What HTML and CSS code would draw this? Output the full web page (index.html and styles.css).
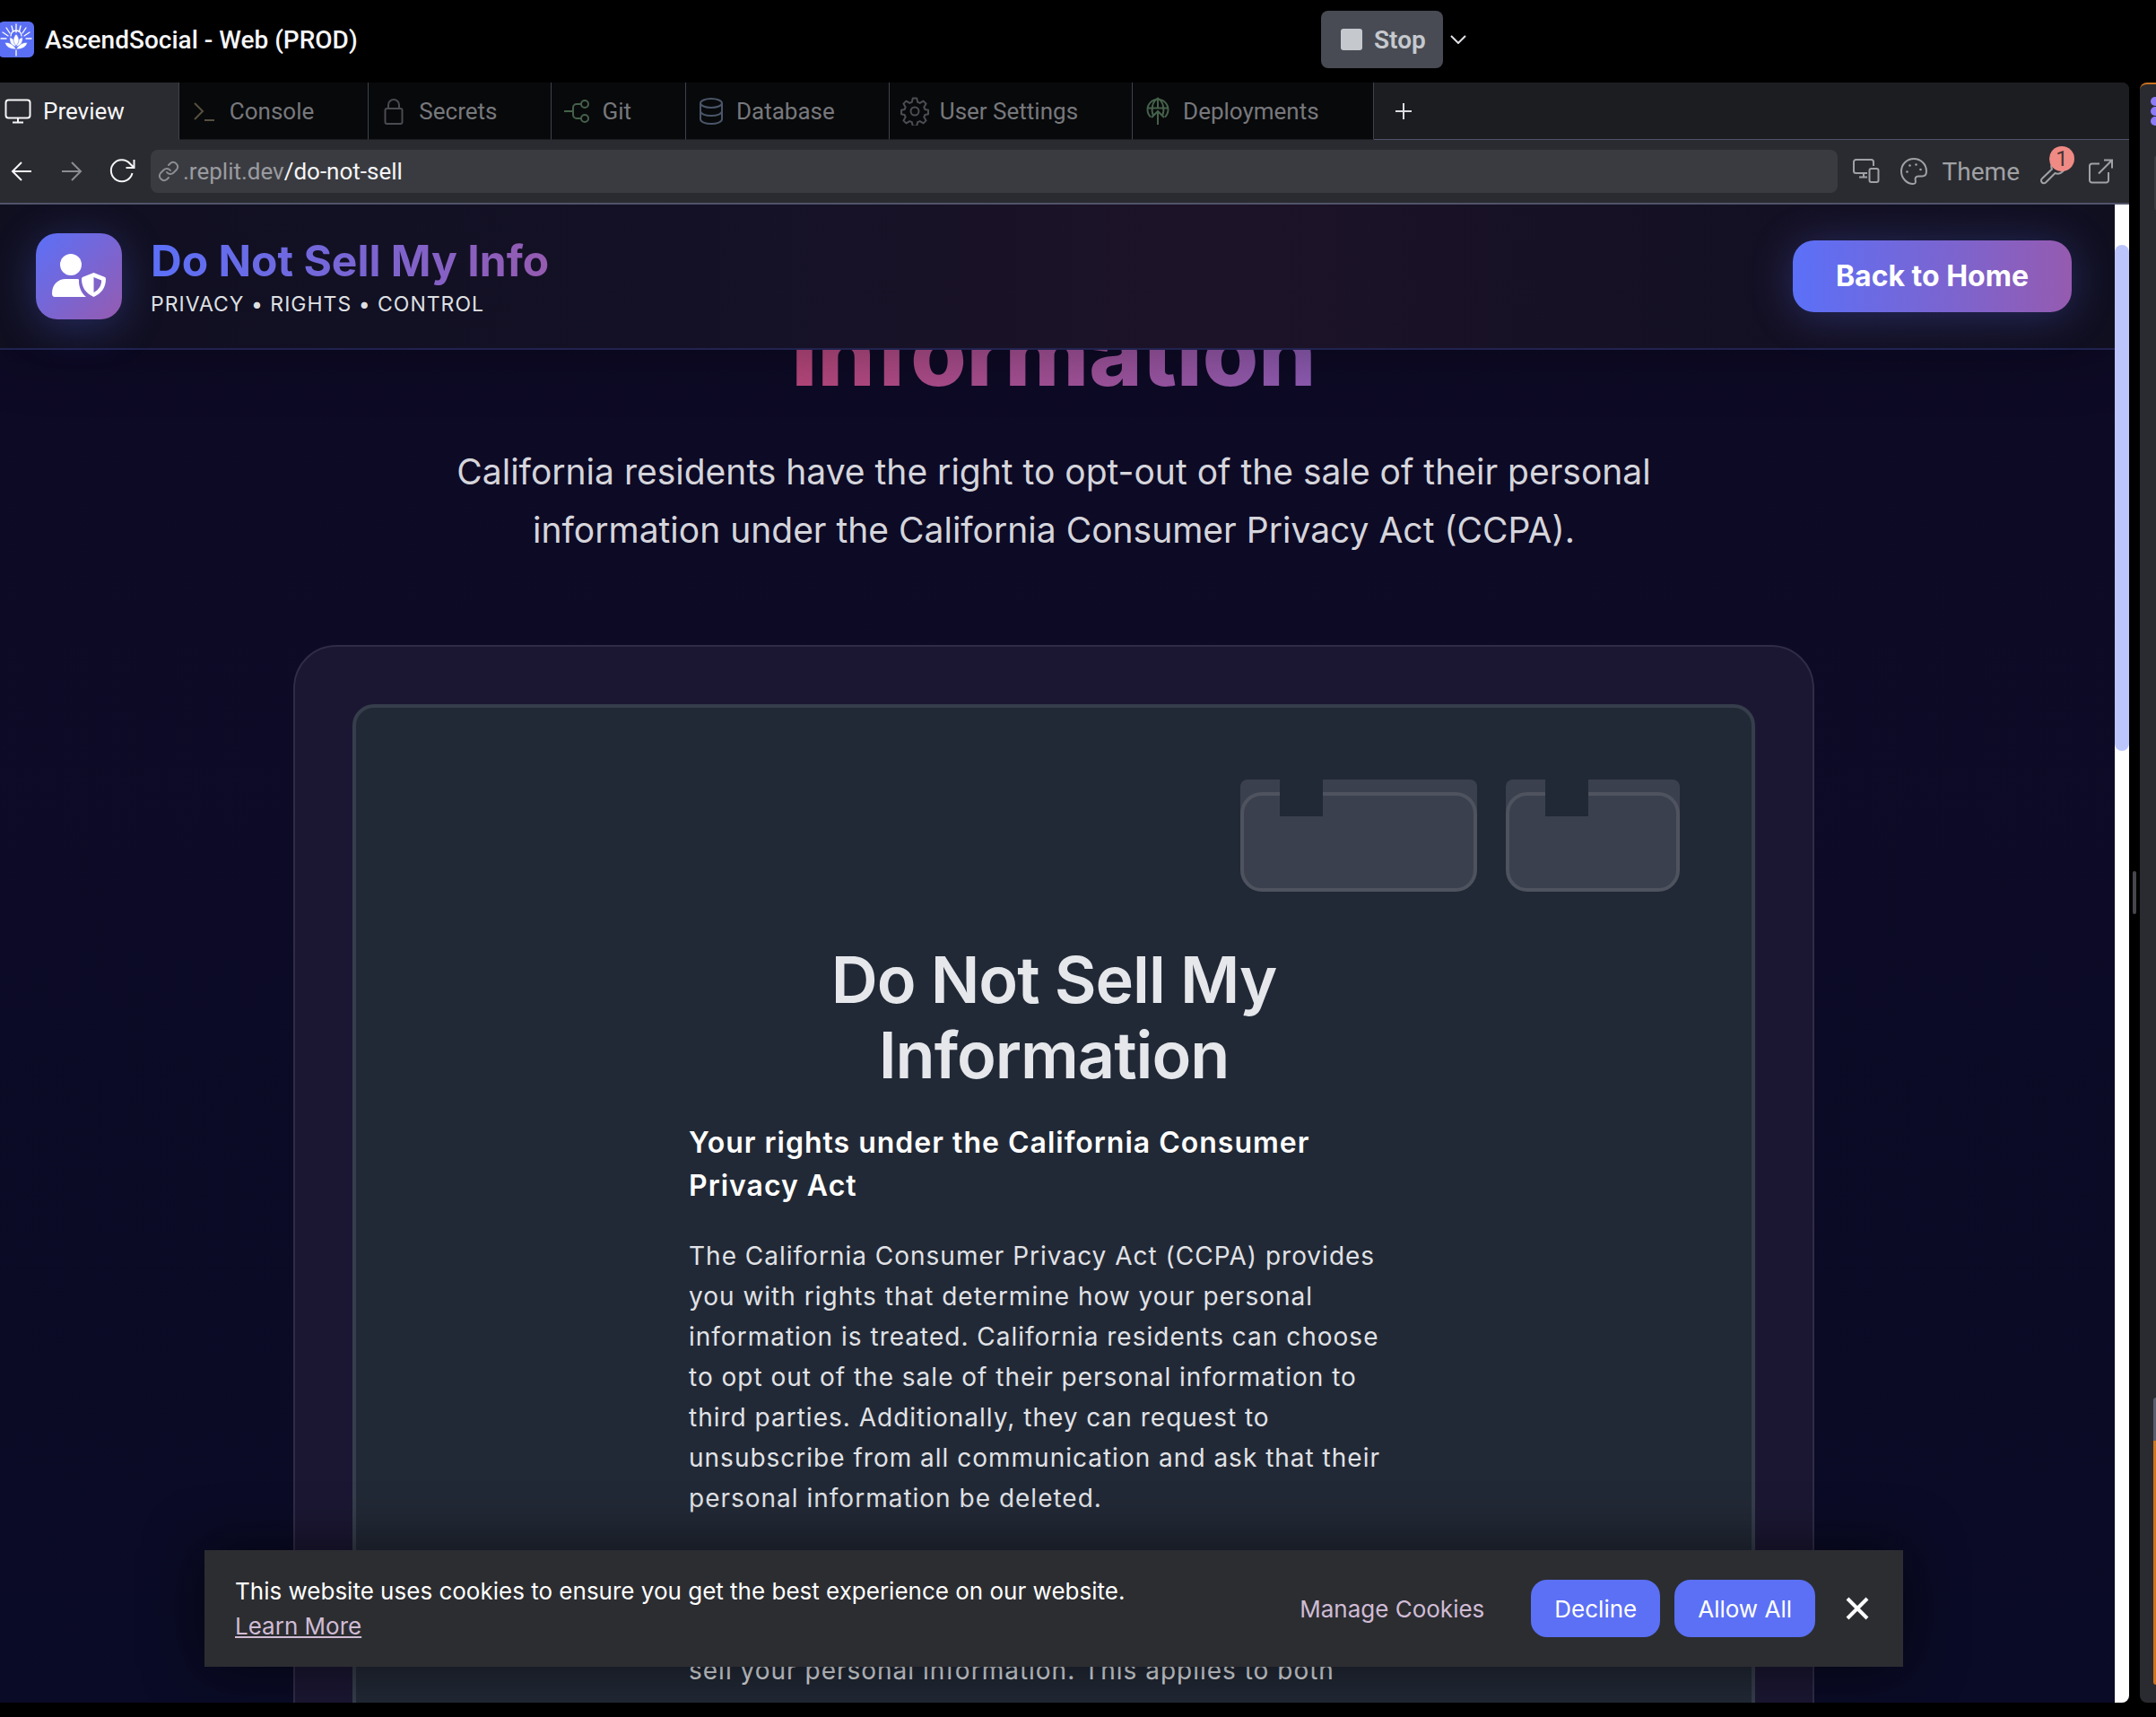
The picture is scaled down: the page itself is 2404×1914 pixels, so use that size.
FILE: index.html
```html
<!DOCTYPE html>
<html lang="en">
<head>
<meta charset="utf-8">
<meta name="viewport" content="width=device-width, initial-scale=1">
<title>AscendSocial - Web (PROD)</title>
<link rel="stylesheet" href="styles.css">
</head>
<body>
<div class="app">
  <header class="topbar">
    <div class="project">
      <svg class="project-logo" viewBox="0 0 40 40" aria-hidden="true">
        <rect width="40" height="40" rx="6" fill="#5b6ff5"/>
        <g stroke="#fff" stroke-width="1.3" stroke-linecap="round" fill="none">
          <path d="M20 3v9M20 32v6M15 5l1.500 6M25 5l-1.500 6M9 7l4 6M31 7l-4 6M5 12l6 4M35 12l-6 4M3 19h6M37 19h-6M14 16a6 6 0 0 1 12 0"/>
        </g>
        <g fill="#fff" stroke="#5b6ff5" stroke-width=".6">
          <path d="M20 31C13 31 8.500 28 7.500 23.500c5-.5 10 2 12.500 7.500z"/>
          <path d="M20 31c7 0 11.500-3 12.500-7.500-5-.5-10 2-12.500 7.500z"/>
          <path d="M20 28c-5-1-8-5-7-10.500 4 1.500 7 5 7 10.500z"/>
          <path d="M20 28c5-1 8-5 7-10.500-4 1.500-7 5-7 10.500z"/>
          <path d="M20 27c-4-4-4-9 0-13 4 4 4 9 0 13z"/>
        </g>
      </svg>
      <span class="project-name">AscendSocial - Web (PROD)</span>
    </div>
    <div class="run">
      <button class="stop" type="button"><span class="stop-mark"></span>Stop</button>
      <button class="icon-button run-menu" type="button" aria-label="Run options">
        <svg width="18" height="10" viewBox="0 0 18 10" fill="none" stroke="#dfe1e5" stroke-width="2"><path d="M1 1l8 8 8-8"/></svg>
      </button>
    </div>
  </header>

  <div class="workspace">
    <section class="pane">
      <div class="tabs" role="tablist">
        <button class="tab tab-active" role="tab" aria-selected="true" type="button">
          <svg class="tab-icon" viewBox="0 0 32 32" stroke="#f5f5f7"><rect x="2.500" y="3.500" width="27" height="20" rx="3"/><path d="M16 23.500v5M10 28.500h12"/></svg>Preview</button>
        <button class="tab" role="tab" type="button">
          <svg class="tab-icon" viewBox="0 0 32 32" stroke="#57503f"><path d="M5 7l9 9-9 9M16 26h11"/></svg>Console</button>
        <button class="tab" role="tab" type="button">
          <svg class="tab-icon" viewBox="0 0 32 32" stroke="#4a4b50"><rect x="6.500" y="13" width="19" height="17" rx="2"/><path d="M10 13V9a6 6 0 0 1 12 0v4"/></svg>Secrets</button>
        <button class="tab" role="tab" type="button">
          <svg class="tab-icon" viewBox="0 0 32 32" stroke="#45604a"><path d="M2 16h10M21 8h-5a4 4 0 0 0-4 4v8a4 4 0 0 0 4 4h5"/><circle cx="25" cy="8" r="4"/><circle cx="25" cy="24" r="4"/></svg>Git</button>
        <button class="tab" role="tab" type="button">
          <svg class="tab-icon" viewBox="0 0 32 32" stroke="#4a5668"><ellipse cx="16" cy="7" rx="12" ry="5"/><path d="M4 7v18c0 2.800 5.400 5 12 5s12-2.200 12-5V7M4 16c0 2.800 5.400 5 12 5s12-2.200 12-5"/></svg>Database</button>
        <button class="tab" role="tab" type="button">
          <svg class="tab-icon" viewBox="0 0 32 32" stroke="#4c4d52"><circle cx="16" cy="16" r="4.500"/><path d="M13.800 1.500h4.400l1 4.300 2.500 1.100 3.900-2.300 3 3-2.300 3.900 1.100 2.500 3.600.8v4.400l-3.600.8-1.100 2.500 2.300 3.900-3 3-3.900-2.300-2.500 1.100-1 4.300h-4.400l-1-4.300-2.500-1.100-3.900 2.300-3-3 2.300-3.900-1.100-2.500-3.600-.8v-4.400l3.600-.8 1.100-2.500-2.300-3.900 3-3 3.900 2.300 2.500-1.100z" stroke-linejoin="round"/></svg>User Settings</button>
        <button class="tab" role="tab" type="button">
          <svg class="tab-icon" viewBox="0 0 32 32" stroke="#45604a"><path d="M8 22.500a11.500 11.500 0 1 1 16 0M4.500 12.500h23M11 21c-3-7-1-16 5-19.500 6 3.500 8 12.500 5 19.500M16 2v11M16 31V17M9 23l7-7 7 7"/></svg>Deployments</button>
        <div class="tabs-rest">
          <button class="icon-button" type="button" aria-label="New tab">
            <svg width="20" height="20" viewBox="0 0 20 20" stroke="#dcdde0" stroke-width="2"><path d="M10 1v18M1 10h18"/></svg>
          </button>
        </div>
      </div>

      <div class="toolbar">
        <div class="nav">
          <button class="icon-button" type="button" aria-label="Back"><svg width="32" height="32" viewBox="0 0 32 32" stroke="#f5f5f7"><path d="M27 16H6M16 6L6 16l10 10"/></svg></button>
          <button class="icon-button" type="button" aria-label="Forward"><svg width="32" height="32" viewBox="0 0 32 32" stroke="#8c8d92"><path d="M5 16h21M16 6l10 10-10 10"/></svg></button>
          <button class="icon-button" type="button" aria-label="Reload"><svg width="32" height="32" viewBox="0 0 32 32" stroke="#f5f5f7"><path d="M27.500 18A12 12 0 1 1 25 7.500l4 4M29.500 3v9h-9"/></svg></button>
        </div>
        <label class="address">
          <svg width="24" height="24" viewBox="0 0 24 24" stroke="#8c8d92" stroke-linecap="round"><path d="M10 13a5 5 0 0 0 7.500.5l3.500-3.500a5 5 0 0 0-7-7l-2 2M14 11a5 5 0 0 0-7.500-.5L3 14a5 5 0 0 0 7 7l2-2"/></svg>
          <span class="address-host">.replit.dev</span>
          <input class="address-path" type="text" value="/do-not-sell" aria-label="Path">
        </label>
        <div class="tools">
          <button class="icon-button" type="button" aria-label="Device size"><svg width="32" height="32" viewBox="0 0 32 32" stroke="#a0a1a5"><path d="M24 10V5.500a2.500 2.500 0 0 0-2.500-2.500h-17A2.500 2.500 0 0 0 2 5.500v10A2.500 2.500 0 0 0 4.500 18H17M13 18v4M8 22.500h9"/><rect x="19.500" y="13" width="10" height="15" rx="2"/></svg></button>
          <button class="icon-button theme" type="button"><svg width="32" height="32" viewBox="0 0 32 32" stroke="#a0a1a5"><path d="M16 2C8.300 2 2 8 2 16s6.500 14 13 14c2.500 0 3.300-1.600 2.800-3.500-.8-3 .4-5 3.200-5h4c3 0 5-2 5-5.500C30 8 23.700 2 16 2z"/><g fill="#a0a1a5" stroke="none"><circle cx="11.500" cy="9.500" r="1.300"/><circle cx="18.500" cy="8.500" r="1.300"/><circle cx="23.500" cy="14" r="1.300"/><circle cx="8.500" cy="16.500" r="1.300"/></g></svg>Theme</button>
          <button class="icon-button devtools" type="button" aria-label="Developer tools"><svg width="32" height="32" viewBox="0 0 32 32" stroke="#a0a1a5" stroke-linejoin="round"><path d="M20.500 8l6-4.500A8 8 0 0 0 15 13.500L4 24a3 3 0 0 0 4 4.500L18.500 18A8 8 0 0 0 29 8l-5 4.500z"/></svg><span class="badge">1</span></button>
          <button class="icon-button" type="button" aria-label="Open in new tab"><svg width="32" height="32" viewBox="0 0 32 32" stroke="#a0a1a5"><path d="M15 7.500H6.500A2.500 2.500 0 0 0 4 10v16a2.500 2.500 0 0 0 2.500 2.500h16A2.500 2.500 0 0 0 25 26v-9M20 3.500h9v9M29 3.500L14 18.500"/></svg></button>
        </div>
      </div>

      <div class="viewport">
        <div class="page">
          <header class="site-header">
            <div class="brand">
              <span class="brand-mark">
                <svg width="60" height="50" viewBox="0 0 60 50" aria-hidden="true">
                  <circle cx="21" cy="12" r="12" fill="#fff"/>
                  <path d="M0 44c0-10 7-16 15-16h12c1 0 2 .1 3 .4C29.500 36 32.500 43.500 38 48H3c-2 0-3-1.500-3-4z" fill="#fff"/>
                  <path fill-rule="evenodd" d="M46.500 21l12 4.800c1 .4 1.500 1.200 1.500 2.200 0 9-4.500 16-13.500 20C37.500 44 33 37 33 28c0-1 .6-1.800 1.500-2.200zM46.500 26v17c6-3 8.500-8 8.700-13.500z" fill="#fff"/>
                </svg>
              </span>
              <div class="brand-text">
                <p class="brand-title">Do Not Sell My Info</p>
                <p class="brand-tag">PRIVACY • RIGHTS • CONTROL</p>
              </div>
            </div>
            <a class="home-link" href="#home">Back to Home</a>
          </header>

          <main class="content">
            <h1 class="hero-title">Information</h1>
            <p class="hero-text">California residents have the right to opt-out of the sale of their personal information under the California Consumer Privacy Act (CCPA).</p>

            <div class="card">
              <section class="request">
                <div class="folders" aria-hidden="true">
                  <span class="folder folder-wide"></span>
                  <span class="folder"></span>
                </div>
                <div class="request-body">
                  <h2 class="request-title">Do Not Sell My Information</h2>
                  <h3 class="request-subtitle">Your rights under the California Consumer Privacy Act</h3>
                  <p class="request-text">The California Consumer Privacy Act (CCPA) provides you with rights that determine how your personal information is treated. California residents can choose to opt out of the sale of their personal information to third parties. Additionally, they can request to unsubscribe from all communication and ask that their personal information be deleted.</p>
                  <p class="request-text request-scope">sell your personal information. This applies to both</p>
                </div>
              </section>
            </div>
          </main>
        </div>
        <div class="scrollbar" aria-hidden="true"><div class="scrollbar-thumb"></div></div>

        <aside class="cookies" aria-label="Cookie notice">
          <p class="cookies-text">This website uses cookies to ensure you get the best experience on our website. <a class="cookies-more" href="#learn">Learn More</a></p>
          <div class="cookies-actions">
            <button class="cookies-manage" type="button">Manage Cookies</button>
            <button class="cookies-button" type="button">Decline</button>
            <button class="cookies-button" type="button">Allow All</button>
            <button class="icon-button cookies-close" type="button" aria-label="Close">
              <svg width="26" height="26" viewBox="0 0 26 26" stroke="#fff" stroke-width="4"><path d="M2 2l22 22M24 2L2 24"/></svg>
            </button>
          </div>
        </aside>
      </div>
    </section>

    <div class="resizer"><span class="resizer-grip"></span></div>

    <section class="side">
      <svg class="side-logo" viewBox="0 0 6 32" aria-hidden="true"><g fill="#8d7bf8"><circle cx="5" cy="5" r="5"/><circle cx="5" cy="16" r="5"/><circle cx="5" cy="27" r="5"/></g></svg>
      <div class="side-chip"></div>
      <div class="side-prompt"></div>
    </section>
  </div>
</div>
</body>
</html>
```
FILE: styles.css
```css
*, *::before, *::after { box-sizing: border-box; }

body {
  margin: 0;
  background: #000;
  color: #f5f5f7;
  font-family: "Roboto", "Noto Sans", sans-serif;
}

h1, h2, h3, p { margin: 0; }

button, input { font: inherit; color: inherit; }

button {
  border: 0;
  background: none;
  padding: 0;
  cursor: pointer;
}

svg { display: block; flex: none; }

.app {
  display: flex;
  flex-direction: column;
  height: 100vh;
  overflow: hidden;
}

/* Top bar */
.topbar {
  display: grid;
  grid-template-columns: 1473fr 931fr;
  padding: 12px 0 16px;
  font-size: 28px;
}

.project { display: flex; align-items: center; gap: 12px; }
.project-logo { width: 40px; height: 40px; margin-left: -2px; }
.project-name { font-weight: 500; }

.run { display: flex; align-items: center; gap: 8px; }

.stop {
  display: flex;
  align-items: center;
  gap: 13px;
  height: 64px;
  padding: 0 19px 0 22px;
  border-radius: 8px;
  background: #484b53;
  color: #c5c9ce;
  font-weight: 600;
}

.stop-mark { width: 24px; height: 24px; border-radius: 3px; background: #c5c9ce; }

.icon-button {
  display: flex;
  align-items: center;
  justify-content: center;
}

/* Workspace */
.workspace {
  flex: 1;
  min-height: 0;
  display: flex;
  padding-bottom: 16px;
}

.pane {
  flex: 1;
  min-width: 0;
  display: flex;
  flex-direction: column;
  overflow: hidden;
  border-radius: 0 8px 8px 0;
  background: #2a2b30;
}

.tabs { display: flex; height: 64px; font-size: 26px; }

.tab {
  display: flex;
  align-items: center;
  gap: 12px;
  padding: 0 60px 0 12px;
  border-right: 1px solid #3f424c;
  border-bottom: 1px solid #1c1d20;
  background: #08090b;
  color: #77787c;
}

.tab-active {
  padding-left: 4px;
  border-bottom-color: #2a2b30;
  background: #2a2b30;
  color: #f5f5f7;
}

.tab-icon { width: 32px; height: 32px; fill: none; stroke-width: 2; }

.tabs-rest {
  flex: 1;
  display: flex;
  padding-left: 23px;
  border-bottom: 1px solid #50546a;
  background: #1c1d20;
}

.toolbar {
  display: flex;
  align-items: center;
  height: 72px;
  padding: 0 16px 0 8px;
  border-bottom: 2px solid #50546a;
  font-size: 26px;
}

.toolbar svg { fill: none; stroke-width: 2; }

.nav { display: flex; gap: 24px; margin-right: 16px; }

.address {
  flex: 1;
  display: flex;
  align-items: center;
  height: 48px;
  padding-left: 8px;
  border-radius: 8px;
  background: #3a3b40;
}

.address-host { margin-left: 4px; color: #9a9ba0; }

.address-path {
  flex: 1;
  min-width: 0;
  padding: 0;
  border: 0;
  outline: 0;
  background: none;
}

.tools { display: flex; gap: 21px; margin-left: 16px; }
.theme { gap: 16px; color: #a0a1a5; font-size: 28px; }

.devtools { position: relative; }

.badge {
  position: absolute;
  top: -12px;
  right: -8px;
  width: 28px;
  height: 28px;
  border-radius: 50%;
  background: #f08a84;
  color: #4a3434;
  font-size: 24px;
  line-height: 28px;
}

/* Previewed site */
.viewport {
  position: relative;
  flex: 1;
  min-height: 0;
  display: flex;
  overflow: hidden;
  font-family: "Inter", sans-serif;
}

.page {
  flex: 1;
  min-width: 0;
  overflow: hidden;
  background: linear-gradient(#0e0a26, #0a0b26);
}

.site-header {
  position: relative;
  z-index: 1;
  display: flex;
  align-items: center;
  justify-content: space-between;
  padding: 32px 48px 32px 40px;
  border-bottom: 2px solid #21234f;
  background: linear-gradient(90deg, #100f20, #141126 33%, #1d1328 58%, #161125 75%, #100f20);
  box-shadow: 0 8px 64px rgba(0, 0, 0, .3);
}

.brand { display: flex; align-items: center; gap: 32px; }

.brand-mark {
  display: flex;
  align-items: center;
  justify-content: center;
  width: 96px;
  height: 96px;
  border-radius: 24px;
  background: linear-gradient(135deg, #5b70f8, #955bb0);
  box-shadow: 0 8px 48px rgba(93, 112, 247, .3);
}

.brand-title {
  width: fit-content;
  background: linear-gradient(90deg, #5b70f8, #955bb0);
  background-clip: text;
  -webkit-background-clip: text;
  color: transparent;
  font-size: 48px;
  font-weight: 700;
  line-height: 62px;
}

.brand-tag {
  color: #dfe0e3;
  font-size: 23px;
  line-height: 34px;
  letter-spacing: 1px;
}

.home-link {
  padding: 0 48px;
  border-radius: 24px;
  background: linear-gradient(90deg, #5b70f8, #955bb0);
  box-shadow: 0 4px 48px rgba(93, 112, 247, .3);
  color: #fff;
  font-size: 32px;
  font-weight: 700;
  line-height: 80px;
  text-decoration: none;
}

.content {
  display: flex;
  flex-direction: column;
  align-items: center;
  padding-right: 8px;
}

.hero-title {
  margin-top: -57px;
  background: linear-gradient(90deg, #b8477c, #8e5cb4);
  background-clip: text;
  -webkit-background-clip: text;
  color: transparent;
  font-size: 101px;
  font-weight: 800;
  line-height: 120px;
}

.hero-text {
  max-width: 1400px;
  margin: 40px 0 96px;
  color: #d5d5db;
  font-size: 39px;
  line-height: 65px;
  text-align: center;
}

.card {
  width: 100%;
  max-width: 1696px;
  padding: 64px;
  border: 2px solid #302c47;
  border-radius: 48px;
  background: #1b1733;
}

.request {
  padding: 80px;
  border: 4px solid #363e4c;
  border-radius: 24px;
  background: #222936;
}

.folders { display: flex; justify-content: flex-end; gap: 32px; }

.folder {
  position: relative;
  width: 194px;
  height: 125px;
  padding-top: 14px;
  border-radius: 8px 8px 24px 24px;
  background: linear-gradient(#3b404f, #3b404f) top / 100% 38px no-repeat;
}

.folder-wide { width: 264px; }

.folder::before {
  content: "";
  display: block;
  height: 111px;
  border: 4px solid #4e535f;
  border-radius: 24px;
  background: #3b404f;
}

.folder::after {
  content: "";
  position: absolute;
  top: 0;
  left: 44px;
  width: 48px;
  height: 41px;
  background: #222936;
}

.request-body { max-width: 814px; margin: 56px auto 0; }

.request-title {
  color: #e5e7eb;
  font-size: 72px;
  font-weight: 600;
  line-height: 84px;
  letter-spacing: -1px;
  text-align: center;
}

.request-subtitle {
  margin-top: 32px;
  color: #fff;
  font-size: 32px;
  font-weight: 600;
  line-height: 48px;
  letter-spacing: 1px;
}

.request-text {
  max-width: 790px;
  margin-top: 32px;
  color: #e0e2e6;
  font-size: 28px;
  line-height: 45px;
  letter-spacing: 1px;
}

.request-scope { margin-top: 147px; }

.scrollbar { width: 16px; padding-top: 45px; background: #fff; }
.scrollbar-thumb { height: 564px; border-radius: 8px; background: #bcc4fc; }

/* Cookie notice */
.cookies {
  position: absolute;
  z-index: 2;
  right: 252px;
  bottom: 40px;
  left: 228px;
  display: flex;
  align-items: center;
  justify-content: space-between;
  padding: 26px 34px;
  background: #2c2d31;
  box-shadow: 0 0 64px rgba(0, 0, 0, .6);
  font-size: 26px;
  line-height: 39px;
}

.cookies-text { max-width: 1040px; color: #fff; }
.cookies-more { color: #d0bcd5; }
.cookies-actions { display: flex; align-items: center; gap: 16px; }
.cookies-manage { margin-right: 36px; color: #d0bcd5; }

.cookies-button {
  height: 64px;
  padding: 0 26px;
  border-radius: 18px;
  background: #5b70f5;
  color: #fff;
}

.cookies-close { margin: 0 4px 0 18px; }

/* Divider and neighbouring pane */
.resizer {
  display: flex;
  align-items: center;
  justify-content: center;
  width: 12px;
}

.resizer-grip { width: 4px; height: 48px; border-radius: 2px; background: #46474d; }

.side {
  display: flex;
  flex-direction: column;
  align-items: flex-end;
  width: 18px;
  padding: 14px 0 20px;
  border-top: 2px solid #c9711f;
  border-radius: 8px 0 0 8px;
  background: #2a2b30;
}

.side-logo { width: 6px; height: 32px; }

.side-chip {
  width: 2px;
  height: 60px;
  margin: 34px 0 auto;
  border-radius: 2px 0 0 2px;
  background: #3a3b40;
}

.side-prompt {
  width: 3px;
  height: 320px;
  border-radius: 3px 0 0 3px;
  background: linear-gradient(#5a5d6e 48px, #d0761f 48px);
}
```
